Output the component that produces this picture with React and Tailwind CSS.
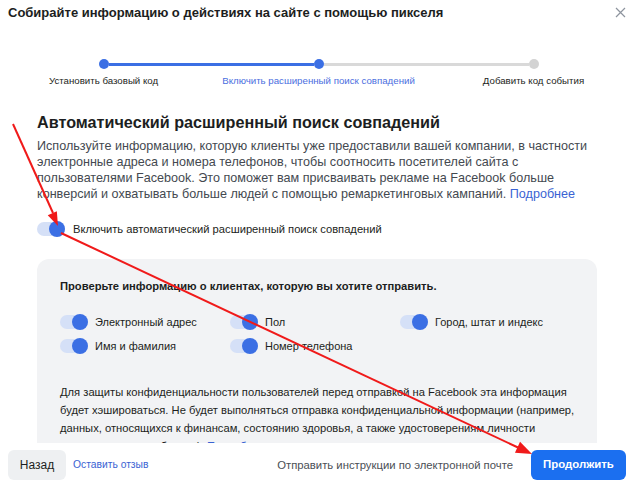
import React from "react";

/* ---------- small pieces ---------- */

function Toggle() {
  return (
    <div className="w-[28px] h-[14px] rounded-full bg-[#d5e0f7] flex items-center justify-end shrink-0">
      <div className="w-[16px] h-[16px] rounded-full bg-[#3b6fe4] shrink-0" />
    </div>
  );
}

function Step({ label, left, right, active, done }) {
  return (
    <div className="flex flex-col items-center">
      <div className="w-full flex items-center h-[10px]">
        <div className={"flex-1 h-[3px] " + left} />
        <div
          className={
            "w-[10px] h-[10px] rounded-full shrink-0 " +
            (done ? "bg-[#3b6fe4]" : "bg-[#d3d3d3]")
          }
        />
        <div className={"flex-1 h-[3px] " + right} />
      </div>
      <div
        className={
          "mt-[5px] text-[9.7px] leading-[13px] whitespace-nowrap " +
          (active ? "text-[#4a6ee0]" : "text-[#1c1e21]")
        }
      >
        {label}
      </div>
    </div>
  );
}

function Field({ label }) {
  return (
    <div className="flex items-center h-[16px]">
      <Toggle />
      <span className="ml-[7px] text-[11px] text-[#1c1e21] whitespace-nowrap">
        {label}
      </span>
    </div>
  );
}

/* ---------- page ---------- */

export default function App() {
  return (
    <div className="relative w-[636px] h-[481px] overflow-hidden bg-white font-['Liberation_Sans',Arial,sans-serif] flex flex-col">
      {/* HEADER */}
      <header className="h-[24px] flex items-center justify-between pl-[8px] pr-[10px] shrink-0">
        <h1 className="text-[13px] font-bold text-[#1c1e21] leading-[16px] mt-[1px]">
          Собирайте информацию о действиях на сайте с помощью пикселя
        </h1>
        <svg width="11" height="11" viewBox="0 0 11 11" className="mt-[1px]">
          <path d="M1 1L10 10M10 1L1 10" stroke="#8d949e" strokeWidth="1.2" />
        </svg>
      </header>

      {/* BODY */}
      <div className="flex-1 overflow-hidden">
        {/* STEPPER */}
        <div className="ml-[-4px] w-[645px] grid grid-cols-3 mt-[35px]">
          <Step label="Установить базовый код" left="" right="bg-[#3b6fe4]" done />
          <Step
            label="Включить расширенный поиск совпадений"
            left="bg-[#3b6fe4]"
            right="bg-[#d9d9d9]"
            active
            done
          />
          <Step label="Добавить код события" left="bg-[#d9d9d9]" right="" />
        </div>

        <div className="pl-[37px] pr-[39px]">
          <h2 className="mt-[25px] text-[16.2px] leading-[20px] font-bold text-[#1c1e21]">
            Автоматический расширенный поиск совпадений
          </h2>
          <p className="mt-[6px] text-[12.6px] leading-[16px] text-[#444950]">
            Используйте информацию, которую клиенты уже предоставили вашей
            компании, в частности электронные адреса и номера телефонов, чтобы
            соотносить посетителей сайта с пользователями Facebook. Это поможет
            вам присваивать рекламе на Facebook больше конверсий и охватывать
            больше людей с помощью ремаркетинговых кампаний.{" "}
            <span className="text-[#3a63d3]">Подробнее</span>
          </p>

          <div className="mt-[19px] flex items-center h-[16px]">
            <Toggle />
            <span className="ml-[8px] text-[11.2px] text-[#1c1e21]">
              Включить автоматический расширенный поиск совпадений
            </span>
          </div>

          {/* CUSTOMER INFO PANEL */}
          <div className="mt-[22px] rounded-[12px] bg-[#f2f3f5] pl-[23px] pr-[20px] pt-[20px] pb-[20px]">
            <div className="text-[11.2px] leading-[15px] font-bold text-[#1c1e21]">
              Проверьте информацию о клиентах, которую вы хотите отправить.
            </div>
            <div className="mt-[20px] grid grid-cols-[170px_170px_170px] gap-y-[8px]">
              <Field label="Электронный адрес" />
              <Field label="Пол" />
              <Field label="Город, штат и индекс" />
              <Field label="Имя и фамилия" />
              <Field label="Номер телефона" />
            </div>
            <p className="mt-[29px] text-[11.2px] leading-[18px] text-[#1c1e21]">
              Для защиты конфиденциальности пользователей перед отправкой на
              Facebook эта информация будет хэшироваться. Не будет выполняться
              отправка конфиденциальной информации (например, данных,
              относящихся к финансам, состоянию здоровья, а также удостоверениям
              личности государственного образца).{" "}
              <span className="text-[#3a63d3]">Подробнее</span>
            </p>
          </div>
        </div>
      </div>

      {/* FOOTER */}
      <footer className="h-[38px] shrink-0 bg-white flex items-end pb-[1px] pl-[8px] pr-[10px]">
        <div className="flex items-center">
          <button className="h-[30px] w-[58px] rounded-[6px] bg-[#eef0f2] text-[12px] text-[#1c1e21]">
            Назад
          </button>
          <span className="ml-[7px] text-[10.3px] text-[#3a63d3]">
            Оставить отзыв
          </span>
        </div>
        <div className="ml-auto flex items-center">
          <span className="text-[11.3px] text-[#4b4f56]">
            Отправить инструкции по электронной почте
          </span>
          <button className="ml-[18px] h-[30px] w-[95px] rounded-[6px] bg-[#1b6ff0] text-[11.4px] font-bold text-white">
            Продолжить
          </button>
        </div>
      </footer>

      {/* RED ANNOTATION ARROWS */}
      <svg
        className="absolute inset-0 pointer-events-none"
        width="636"
        height="481"
        viewBox="0 0 636 481"
      >
        <line x1="13" y1="124" x2="53" y2="213" stroke="#f01a1a" strokeWidth="2" />
        <polygon points="58,226 56.85,211.15 47.75,215.25" fill="#f01a1a" />
        <line x1="61" y1="233" x2="518" y2="447.5" stroke="#f01a1a" strokeWidth="2" />
        <polygon points="532,454 514.95,452.63 520.05,441.77" fill="#f01a1a" />
      </svg>
    </div>
  );
}
